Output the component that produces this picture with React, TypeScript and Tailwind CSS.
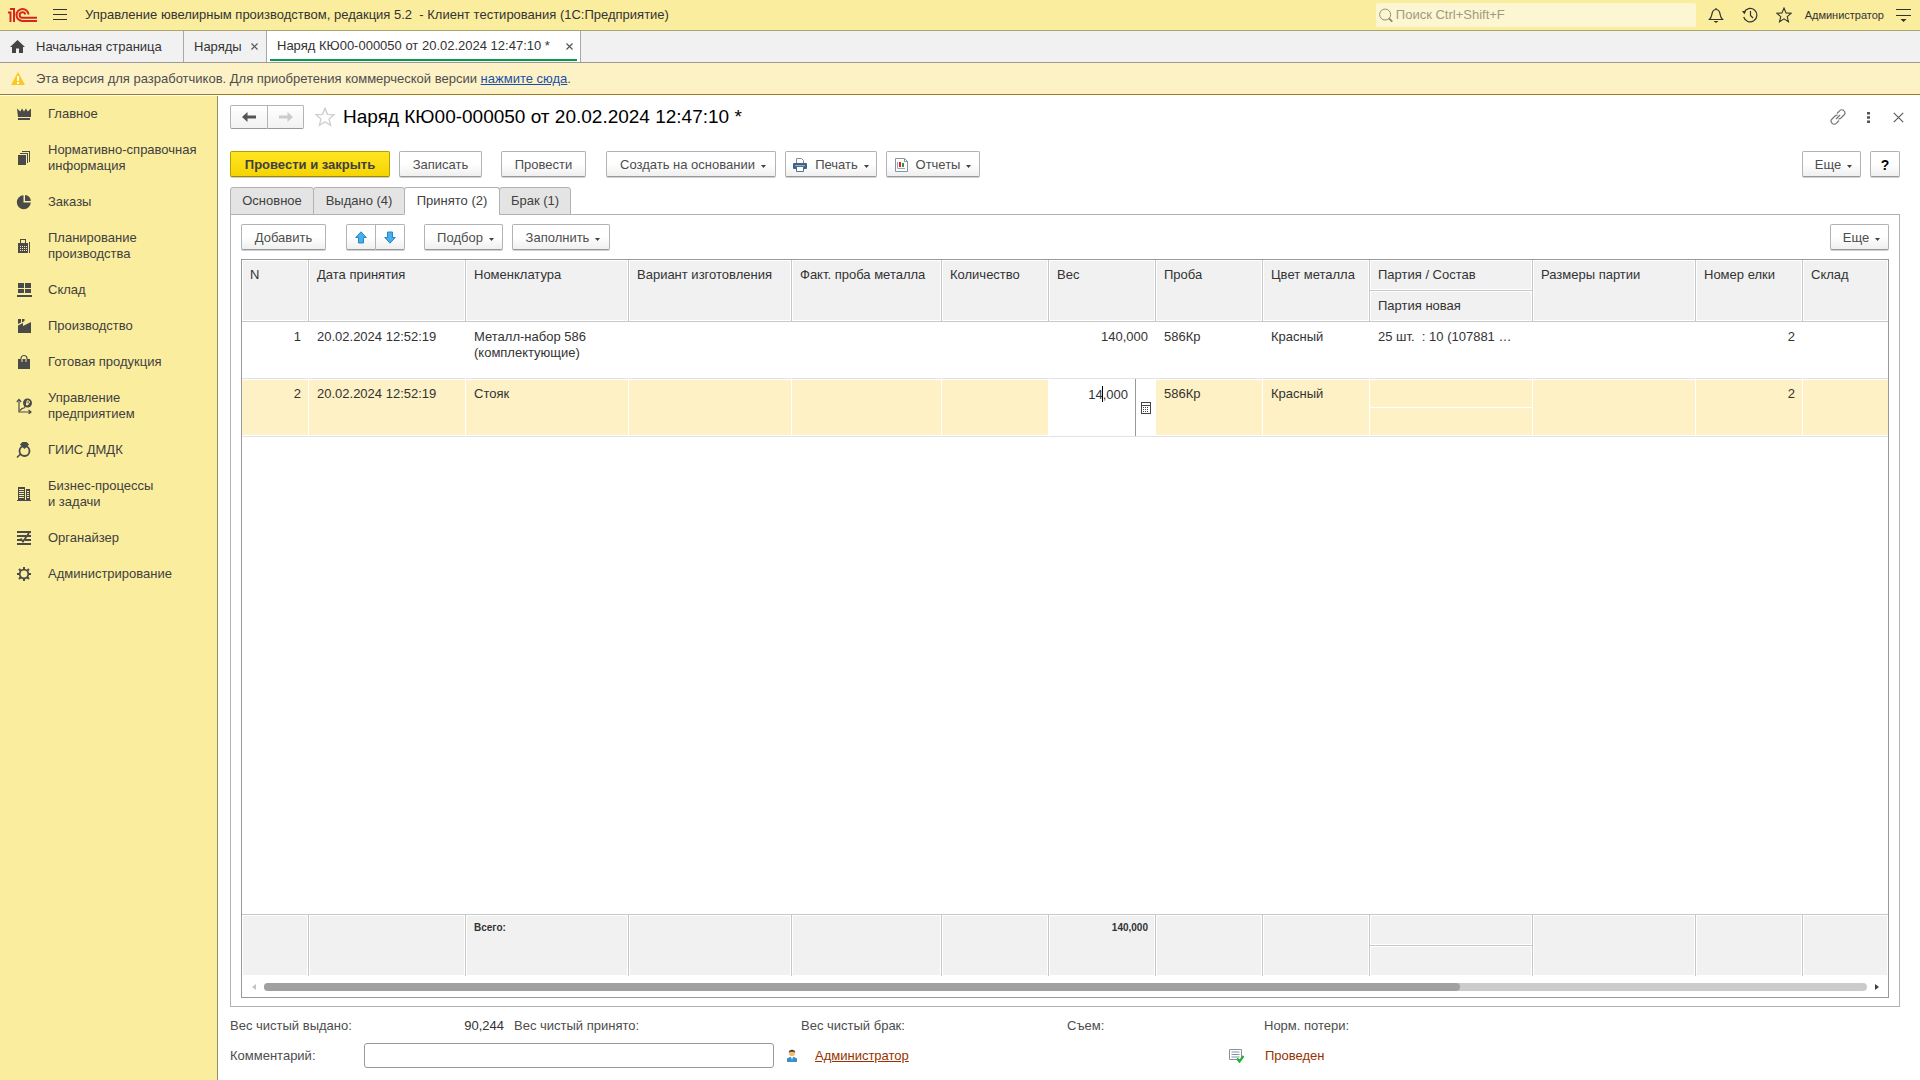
import { useState } from "react";
import type { ReactNode } from "react";

const NBSP = "\u00a0";

/* ---------- icons ---------- */

function Logo() {
  return (
    <svg width="30" height="16" viewBox="0 0 30 16" fill="none" stroke="#d9261c" strokeWidth="2" aria-label="1С">
      <path d="M0 5.5h2.5v9.5M2 2h4v13" />
      <path d="M20.5 7.5a6 6 0 1 0-6 6.5H29" />
      <path d="M17.2 7.5a2.8 2.8 0 1 0-2.7 3.3H29" />
    </svg>
  );
}

function Burger() {
  return (
    <svg width="14" height="12" viewBox="0 0 14 12" fill="#333" shapeRendering="crispEdges">
      <path d="M0 0h14v1H0zM0 5h14v1H0zM0 10h14v1H0z" />
    </svg>
  );
}

function Caret() {
  return (
    <svg width="5" height="3" viewBox="0 0 5 3" fill="#404040" className="mt-[3px] shrink-0">
      <path d="M0 0h5L2.5 3z" />
    </svg>
  );
}

function CloseIcon({ size = 7 }: { size?: number }) {
  return (
    <svg width={size} height={size} viewBox="0 0 7 7" stroke="#555" strokeWidth={size > 7 ? 0.7 : 1.2}>
      <path d="M.5.5l6 6M6.5.5l-6 6" />
    </svg>
  );
}

function StarIcon({ size, color }: { size: number; color: string }) {
  return (
    <svg width={size} height={size} viewBox="0 0 16 16" fill="none" stroke={color} strokeWidth="1.1">
      <path d="M8 1l2 4.9 5.2.3-4 3.4 1.3 5.1L8 11.9l-4.5 2.8 1.3-5.1-4-3.4 5.2-.3z" />
    </svg>
  );
}

function Small({ children }: { children: ReactNode }) {
  return (
    <svg width="16" height="16" viewBox="0 0 16 16" fill="#4a4a4a" className="shrink-0">
      {children}
    </svg>
  );
}

const icons = {
  crown: (
    <Small>
      <path d="M1 2.500l3.300 3L6 2.500 8 5.500l2-3 1.700 3L15 2.500V11H2zM2 12h12v2H2z" />
    </Small>
  ),
  books: (
    <Small>
      <path d="M2 5h8v10H2zM4 3h8v10h-1V4H4zM6 1h8v11h-1V2H6z" />
    </Small>
  ),
  pie: (
    <Small>
      <path d="M7.500 1.200v7.300h7.300A7 7 0 1 1 7.500 1.200z" />
      <path d="M9 1a6 6 0 0 1 5.800 6H9z" />
    </Small>
  ),
  register: (
    <Small>
      <path d="M3 5h1V1h6v4h2v10H2V5zM5 2v3h4V2zM13 4h1v11h-1z" fillRule="evenodd" />
      <path d="M4 8h1v1H4zM6 8h1v1H6zM8 8h1v1H8zM4 10h1v1H4zM6 10h1v1H6zM8 10h1v1H8zM4 12h1v1H4zM6 12h1v1H6zM8 12h1v1H8zM10 8h1v1h-1zM10 10h1v1h-1zM10 12h1v1h-1z" fill="#fbed9e" />
    </Small>
  ),
  stock: (
    <Small>
      <path d="M2 1h6v5H2zM9 1h6v5H9zM2 7h6v4H2zM9 7h6v4H9zM1 13h15v2H1z" />
    </Small>
  ),
  factory: (
    <Small>
      <path d="M2 1h3v3.500L2 6zM6 1h2.500v2L6 4.500zM2 7.500L7 5v3l8-4v11H2z" />
    </Small>
  ),
  bag: (
    <Small>
      <path d="M2 5h12v10H2z" />
      <path d="M5 8V4.500a3 3 0 0 1 6 0V8" fill="none" stroke="#4a4a4a" strokeWidth="1.200" />
      <path d="M5.500 8V5h1v3zM9.500 8V5h1v3z" fill="#fbed9e" />
    </Small>
  ),
  finance: (
    <Small>
      <path d="M3 3.500V14H15M.800 4L3 1.500 5.200 4M12.500 12l2.500 2-2.500 2M4 12.500l2-2 2-.500 1-1.500" fill="none" stroke="#4a4a4a" strokeWidth="1.200" />
      <circle cx="11.500" cy="5" r="4.500" />
      <path d="M11 7.500V2.800h1.200a1.300 1.300 0 0 1 0 2.600H10M10 6.500h2.500" fill="none" stroke="#fbed9e" />
    </Small>
  ),
  ring: (
    <Small>
      <circle cx="8.500" cy="9" r="5" fill="none" stroke="#4a4a4a" strokeWidth="1.800" />
      <path d="M5 2.500L7 .500h3l2 2L8.500 6zM5 11.500L1 15.500" stroke="#4a4a4a" strokeWidth="1.500" />
    </Small>
  ),
  building: (
    <Small>
      <path d="M2 1h7v13H2zM10 3h4v11h-4zM1 14h14v1H1z" />
      <path d="M3 3h5v1H3zM3 5h5v1H3zM3 7h5v1H3zM3 9h5v1H3zM3 11h5v1H3zM11 5h2v1h-2zM11 7h2v1h-2zM11 9h2v1h-2zM11 11h2v1h-2z" fill="#fbed9e" />
    </Small>
  ),
  planner: (
    <Small>
      <path d="M1 1h14v2H1zM1 5h9v2H1zM11 5h4v2h-4zM1 9h5v2H1zM9 9h6v2H9zM1 13h14v2H1z" />
      <path d="M4.500 8.500L7 11.500 13 3" fill="none" stroke="#4a4a4a" strokeWidth="1.800" />
    </Small>
  ),
  gear: (
    <Small>
      <circle cx="8" cy="8" r="4.300" fill="none" stroke="#4a4a4a" strokeWidth="1.800" />
      <path d="M8 1v3M8 12v3M1 8h3M12 8h3M3 3l2 2M11 11l2 2M13 3l-2 2M5 11l-2 2" stroke="#4a4a4a" strokeWidth="2" />
    </Small>
  ),
};

/* ---------- data ---------- */

const sections: { icon: keyof typeof icons; lines: string[] }[] = [
  { icon: "crown", lines: ["Главное"] },
  { icon: "books", lines: ["Нормативно-справочная", "информация"] },
  { icon: "pie", lines: ["Заказы"] },
  { icon: "register", lines: ["Планирование", "производства"] },
  { icon: "stock", lines: ["Склад"] },
  { icon: "factory", lines: ["Производство"] },
  { icon: "bag", lines: ["Готовая продукция"] },
  { icon: "finance", lines: ["Управление", "предприятием"] },
  { icon: "ring", lines: ["ГИИС ДМДК"] },
  { icon: "building", lines: ["Бизнес-процессы", "и задачи"] },
  { icon: "planner", lines: ["Органайзер"] },
  { icon: "gear", lines: ["Администрирование"] },
];

const formTabs = [
  { title: "Основное", width: "w-[84px]" },
  { title: "Выдано (4)", width: "w-[92px]" },
  { title: "Принято (2)", width: "w-[96px]" },
  { title: "Брак (1)", width: "w-[72px]" },
];

/* ---------- controls ---------- */

const buttonBase =
  "flex h-[26px] items-center justify-center rounded-[2px] border border-[#b3b3b3] border-b-[#999] bg-linear-to-b from-white from-50% to-[#efefef] text-[#4d4d4d] shadow-[0_1px_0_#d0d0d0]";

function Button({ className, menu, icon, children }: { className: string; menu?: boolean; icon?: ReactNode; children: ReactNode }) {
  return (
    <button type="button" className={`${buttonBase} pt-[2px] ${className}`}>
      {icon && <span className="mr-2">{icon}</span>}
      {children}
      {menu && (
        <span className="ml-[6px]">
          <Caret />
        </span>
      )}
    </button>
  );
}

function PrinterIcon() {
  return (
    <svg width="14" height="14" viewBox="0 0 14 14">
      <path d="M3.500 5V.500h5L10.500 2.500V5" fill="#fff" stroke="#7d8b99" />
      <rect x="0" y="5" width="14" height="6" rx="1" fill="#3d6285" />
      <path d="M2 7h10v1H2z" fill="#8fb0cc" />
      <path d="M3.500 8.500h7v5h-7z" fill="#fff" stroke="#54728f" />
    </svg>
  );
}

function ReportIcon() {
  return (
    <svg width="13" height="14" viewBox="0 0 13 14">
      <path d="M.500.500h9l3 3v10H.500z" fill="#fff" stroke="#8594a3" />
      <path d="M9.500.500v3h3" fill="none" stroke="#8594a3" />
      <path d="M2.500 4v6.500H10" fill="none" stroke="#9aa6b2" />
      <path d="M4 4h2v5H4z" fill="#e02020" />
      <path d="M7 5h2v4H7z" fill="#2f9a3a" />
    </svg>
  );
}

function TopBar() {
  return (
    <header className="flex h-[31px] shrink-0 items-center border-b border-[#a9a56e] bg-[#fbed9e] pr-[9px] pl-2">
      <Logo />
      <button type="button" aria-label="Меню" className="ml-[15px]">
        <Burger />
      </button>
      <h1 className="ml-[18px] whitespace-pre text-[#333]">
        {"Управление ювелирным производством, редакция 5.2  - Клиент тестирования (1С:Предприятие)"}
      </h1>
      <div className="ml-auto flex h-6 w-[320px] items-center rounded-[2px] bg-[#fdf6d3] pl-[3px]">
        <svg width="15" height="15" viewBox="0 0 15 15" fill="none" stroke="#8f8a6c">
          <circle cx="6.500" cy="6.500" r="5.800" />
          <path d="M10.500 10.500l3.500 3.500" strokeWidth="2" />
        </svg>
        <input
          type="search"
          aria-label="Поиск"
          placeholder="Поиск Ctrl+Shift+F"
          className="ml-[3px] w-full bg-transparent pb-px outline-none placeholder:text-[#a19b7c]"
        />
      </div>
      <div className="ml-[12px] flex items-center gap-[18px]">
        <button type="button" aria-label="Оповещения">
          <svg width="16" height="16" viewBox="0 0 16 16" fill="none" stroke="#333" strokeWidth="1.200">
            <path d="M1.500 12.500h13C12.500 10.500 12.500 9 11.800 6 11.200 3.500 10 2.500 8 2.500S4.800 3.500 4.200 6c-.700 3-.700 4.500-2.700 6.500zM8 2.500V1" />
            <path d="M5.500 14h5L8 16z" fill="#333" stroke="none" />
          </svg>
        </button>
        <button type="button" aria-label="История">
          <svg width="16" height="16" viewBox="0 0 16 16" fill="none" stroke="#333" strokeWidth="1.200">
            <path d="M2 5.500a6.700 6.700 0 1 1-.300 4.500M8.500 4v4.500l2.500 2.500" />
            <path d="M0 4l4 0-1.500 3.500z" fill="#333" stroke="none" />
          </svg>
        </button>
        <button type="button" aria-label="Избранное">
          <StarIcon size={16} color="#333" />
        </button>
      </div>
      <a href="#user" className="ml-[13px] text-[11px] text-[#333]">
        Администратор
      </a>
      <button type="button" aria-label="Сервис" className="ml-[12px]">
        <svg width="15" height="13" viewBox="0 0 15 13" fill="#333">
          <path d="M0 0h15v1H0zM0 6h15v1H0zM4.500 10h6l-3 3z" />
        </svg>
      </button>
    </header>
  );
}

function WindowTabs() {
  return (
    <nav className="flex h-8 shrink-0 border-b border-[#9a9a9a] bg-[#f1f1f1] text-[#333]">
      <a href="#home" className="flex w-[184px] items-center border-r border-[#a8a8a8] pl-[10px]">
        <svg width="15" height="13" viewBox="0 0 15 13" fill="#444">
          <path d="M7.500 0L15 7h-2v6H9V8.500H6V13H2V7H0z" />
        </svg>
        <span className="ml-[11px]">Начальная страница</span>
      </a>
      <div className="flex w-[83px] items-center justify-between border-r border-[#a8a8a8] pr-2 pl-[10px]">
        <a href="#orders">Наряды</a>
        <button type="button" aria-label="Закрыть вкладку">
          <CloseIcon />
        </button>
      </div>
      <div className="flex w-[314px] flex-col border-r border-[#a8a8a8] bg-white px-[3px] pb-px">
        <div className="flex flex-1 items-center justify-between border-b-2 border-[#079a4c] pt-[2px] pr-1 pl-[7px]">
          <a href="#order">Наряд КЮ00-000050 от 20.02.2024 12:47:10 *</a>
          <button type="button" aria-label="Закрыть вкладку">
            <CloseIcon />
          </button>
        </div>
      </div>
    </nav>
  );
}

function Banner() {
  return (
    <div className="flex h-8 shrink-0 items-center border-b border-[#9c7c1c] bg-[#fdf2c6] pl-[11px] text-[#4d4d4d]">
      <svg width="14" height="13" viewBox="0 0 14 13">
        <path d="M7 0l7 13H0z" fill="#fbc91b" />
        <path d="M6 4h2v5H6zM6 10h2v2H6z" fill="#fff" />
      </svg>
      <p className="ml-[11px]">
        Эта версия для разработчиков. Для приобретения коммерческой версии{" "}
        <a href="#buy" className="text-[#1a4fa8] underline">
          нажмите сюда
        </a>
        .
      </p>
    </div>
  );
}

function Sidebar() {
  return (
    <aside className="mt-px w-[218px] shrink-0 border-r border-[#968d5e] bg-[#fbed9e] text-[#404040]">
      {sections.map((s) => (
        <a key={s.icon} href={`#${s.icon}`} className="flex items-center py-[10px] pl-4">
          {icons[s.icon]}
          <span className="ml-4 leading-4">
            {s.lines.map((l) => (
              <span key={l} className="block whitespace-nowrap">
                {l}
              </span>
            ))}
          </span>
        </a>
      ))}
    </aside>
  );
}

/* ---------- table ---------- */

const headCell = "border-r border-b border-[#c8c8c8] bg-[#f1f1f1] px-2 pt-[7px] text-left align-top font-normal whitespace-nowrap shadow-[inset_0_0_0_1px_#fff] last:border-r-0";
const cell = "border-r border-b border-r-white border-b-[#e1e2e6] pt-[7px] pr-[7px] pl-2 align-top last:border-r-0";
const active = `${cell} bg-[#fdf1c5] shadow-[inset_0_1px_0_#fff,inset_0_-1px_0_#fff]`;
const footCell = "border-t border-r border-[#c8c8c8] bg-[#f1f1f1] pt-[5px] pr-[7px] pl-2 align-top text-[10px] font-bold shadow-[inset_0_0_0_1px_#fff] last:border-r-0";

function AcceptedTable() {
  const [weight, setWeight] = useState("14,000");

  return (
    <table className="h-full w-full table-fixed border-separate border-spacing-0 leading-4 text-[#333]">
      <colgroup>
        <col className="w-[67px]" />
        <col className="w-[157px]" />
        <col className="w-[163px]" />
        <col className="w-[163px]" />
        <col className="w-[150px]" />
        <col className="w-[107px]" />
        <col className="w-[107px]" />
        <col className="w-[107px]" />
        <col className="w-[107px]" />
        <col className="w-[163px]" />
        <col className="w-[163px]" />
        <col className="w-[107px]" />
        <col />
      </colgroup>
      <thead>
        <tr className="h-[31px]">
          <th rowSpan={2} className={headCell}>N</th>
          <th rowSpan={2} className={headCell}>Дата принятия</th>
          <th rowSpan={2} className={headCell}>Номенклатура</th>
          <th rowSpan={2} className={headCell}>Вариант изготовления</th>
          <th rowSpan={2} className={headCell}>Факт. проба металла</th>
          <th rowSpan={2} className={headCell}>Количество</th>
          <th rowSpan={2} className={headCell}>Вес</th>
          <th rowSpan={2} className={headCell}>Проба</th>
          <th rowSpan={2} className={headCell}>Цвет металла</th>
          <th className={headCell}>Партия / Состав</th>
          <th rowSpan={2} className={headCell}>Размеры партии</th>
          <th rowSpan={2} className={headCell}>Номер елки</th>
          <th rowSpan={2} className={headCell}>Склад</th>
        </tr>
        <tr className="h-[31px]">
          <th className="border-r border-b border-[#c8c8c8] bg-[#f1f1f1] px-2 pt-[7px] text-left align-top font-normal shadow-[inset_0_0_0_1px_#fff]">
            Партия новая
          </th>
        </tr>
      </thead>
      <tbody>
        <tr className="h-[57px]">
          <td className={`${cell} text-right`}>1</td>
          <td className={cell}>20.02.2024 12:52:19</td>
          <td className={cell}>Металл-набор 586 (комплектующие)</td>
          <td className={cell} />
          <td className={cell} />
          <td className={cell} />
          <td className={`${cell} text-right`}>140,000</td>
          <td className={cell}>586Кр</td>
          <td className={cell}>Красный</td>
          <td className={`${cell} whitespace-nowrap`}>{`25 шт.${NBSP} : 10 (107881 …`}</td>
          <td className={cell} />
          <td className={`${cell} text-right`}>2</td>
          <td className={cell} />
        </tr>
        <tr className="h-[29px]">
          <td rowSpan={2} className={`${active} text-right`}>2</td>
          <td rowSpan={2} className={active}>20.02.2024 12:52:19</td>
          <td rowSpan={2} className={active}>Стояк</td>
          <td rowSpan={2} className={active} />
          <td rowSpan={2} className={active} />
          <td rowSpan={2} className={active} />
          <td rowSpan={2} className="h-[58px] border-b border-[#e1e2e6] bg-white p-0">
            <div className="flex h-[57px]">
              <div className="relative flex-1 border-r border-[#999]">
                <input
                  aria-label="Вес"
                  value={weight}
                  onChange={(e) => setWeight(e.target.value)}
                  className="h-[30px] w-full bg-transparent pr-[7px] text-right leading-4 outline-none"
                />
                <span className="absolute top-[7px] right-[32px] h-4 w-px bg-black" />
              </div>
              <button type="button" aria-label="Калькулятор" className="flex w-5 items-center justify-center">
                <svg width="10" height="12" viewBox="0 0 10 12" shapeRendering="crispEdges">
                  <path d="M.500.500h9v11h-9z" fill="#fff" stroke="#444" />
                  <path d="M1 3h8v1H1zM2 5h1v1H2zM4 5h1v1H4zM6 5h1v1H6zM2 7h1v1H2zM4 7h1v1H4zM6 7h1v1H6zM2 9h1v1H2zM4 9h1v1H4zM6 9h1v1H6z" fill="#444" />
                </svg>
              </button>
            </div>
          </td>
          <td rowSpan={2} className={active}>586Кр</td>
          <td rowSpan={2} className={active}>Красный</td>
          <td className="border-r border-b border-white bg-[#fdf1c5] shadow-[inset_0_1px_0_#fff]" />
          <td rowSpan={2} className={active} />
          <td rowSpan={2} className={`${active} text-right`}>2</td>
          <td rowSpan={2} className={active} />
        </tr>
        <tr className="h-[29px]">
          <td className="border-r border-b border-r-white border-b-[#e1e2e6] bg-[#fdf1c5] shadow-[inset_0_-1px_0_#fff]" />
        </tr>
        <tr>
          <td colSpan={13} />
        </tr>
      </tbody>
      <tfoot>
        <tr className="h-[31px]">
          <td rowSpan={2} className={footCell} />
          <td rowSpan={2} className={footCell} />
          <td rowSpan={2} className={footCell}>Всего:</td>
          <td rowSpan={2} className={footCell} />
          <td rowSpan={2} className={footCell} />
          <td rowSpan={2} className={footCell} />
          <td rowSpan={2} className={`${footCell} text-right`}>140,000</td>
          <td rowSpan={2} className={footCell} />
          <td rowSpan={2} className={footCell} />
          <td className={footCell} />
          <td rowSpan={2} className={footCell} />
          <td rowSpan={2} className={footCell} />
          <td rowSpan={2} className={footCell} />
        </tr>
        <tr className="h-[31px]">
          <td className="border-t border-r border-[#c8c8c8] bg-[#f1f1f1] shadow-[inset_0_0_0_1px_#fff]" />
        </tr>
      </tfoot>
    </table>
  );
}

function ScrollBar() {
  return (
    <div className="flex h-[21px] shrink-0 items-center pr-[9px] pl-[10px]">
      <svg width="4" height="6" viewBox="0 0 4 6" fill="#c4c4c4">
        <path d="M4 0v6L0 3z" />
      </svg>
      <div className="mx-[8px] h-2 flex-1 rounded-full bg-[#cbcbcb]">
        <div className="h-2 w-[1196px] max-w-3/4 rounded-full bg-[#a0a0a0]" />
      </div>
      <svg width="4" height="6" viewBox="0 0 4 6" fill="#404040">
        <path d="M0 0v6l4-3z" />
      </svg>
    </div>
  );
}

function MoveArrow({ down }: { down?: boolean }) {
  return (
    <svg width="12" height="13" viewBox="0 0 12 13" fill="#45b0ee" stroke="#2b84bd" className={down ? "rotate-180" : ""}>
      <path d="M6 .800l5.300 5.700H8.500v5.500h-5V6.500H.700z" />
    </svg>
  );
}

function FormHeader() {
  return (
    <div className="flex h-6 items-center">
      <div className="flex">
        <button type="button" aria-label="Назад" className="flex h-6 w-[38px] items-center justify-center rounded-l-[2px] border border-[#b3b3b3] border-b-[#999] bg-linear-to-b from-white to-[#f2f2f2]">
          <svg width="14" height="10" viewBox="0 0 14 10" fill="#555">
            <path d="M5.500 0v3.500H14v3H5.500V10L0 5z" />
          </svg>
        </button>
        <button type="button" aria-label="Вперед" className="flex h-6 w-[36px] items-center justify-center rounded-r-[2px] border border-l-0 border-[#b3b3b3] border-b-[#999] bg-linear-to-b from-white to-[#f2f2f2]">
          <svg width="14" height="10" viewBox="0 0 14 10" fill="#ccc">
            <path d="M8.500 0v3.500H0v3h8.500V10L14 5z" />
          </svg>
        </button>
      </div>
      <button type="button" aria-label="В избранное" className="ml-[11px]">
        <StarIcon size={20} color="#d0d0d0" />
      </button>
      <h2 className="ml-2 text-[19px] leading-6 text-black">Наряд КЮ00-000050 от 20.02.2024 12:47:10 *</h2>
      <div className="-mr-1 ml-auto flex items-center">
        <button type="button" aria-label="Ссылка">
          <svg width="16" height="16" viewBox="0 0 16 16" fill="none" stroke="#777" strokeWidth="1.200">
            <path d="M7 4.500l2.500-2.700a2.900 2.900 0 0 1 4.500 0 3 3 0 0 1 0 4.200l-3 3a3 3 0 0 1-2.500.800M9 11.500l-2.500 2.700a2.900 2.900 0 0 1-4.500 0 3 3 0 0 1 0-4.200l3-3a3 3 0 0 1 2.500-.800M6 10l4-4" />
          </svg>
        </button>
        <button type="button" aria-label="Ещё действия" className="ml-[21px]">
          <svg width="3" height="11" viewBox="0 0 3 11" fill="#555">
            <path d="M0 0h3v2.500H0zM0 4.250h3v2.500H0zM0 8.500h3V11H0z" />
          </svg>
        </button>
        <button type="button" aria-label="Закрыть" className="ml-[23px]">
          <CloseIcon size={11} />
        </button>
      </div>
    </div>
  );
}

export default function App() {
  const [tab, setTab] = useState("Принято (2)");

  return (
    <div className="flex h-screen flex-col bg-white font-['Liberation_Sans',Arial,sans-serif] text-[13px] leading-4">
      <TopBar />
      <WindowTabs />
      <Banner />
      <div className="flex min-h-0 flex-1">
        <Sidebar />
        <main className="flex min-w-0 flex-1 flex-col pt-[10px] pr-5 pb-3 pl-3">
          <FormHeader />

          {/* Form commands */}
          <div className="mt-[22px] flex items-center">
            <button
              type="button"
              className="flex h-[26px] w-[160px] items-center justify-center rounded-[2px] border border-[#b59f00] border-b-[#9c8800] bg-linear-to-b from-[#ffe51f] to-[#f5d400] pt-[2px] font-bold text-[#404040] shadow-[0_1px_0_#d0d0d0]"
            >
              Провести и закрыть
            </button>
            <Button className="ml-[9px] w-[83px]">Записать</Button>
            <Button className="ml-[19px] w-[85px]">Провести</Button>
            <Button className="ml-5 w-[170px] pl-1" menu>Создать на основании</Button>
            <Button className="ml-[9px] w-[92px]" menu icon={<PrinterIcon />}>Печать</Button>
            <Button className="ml-[9px] w-[94px]" menu icon={<ReportIcon />}>Отчеты</Button>
            <Button className="ml-auto w-[59px] pl-1" menu>Еще</Button>
            <Button className="ml-[9px] w-[30px] text-sm font-bold text-black">?</Button>
          </div>

          {/* Pages of the document */}
          <div role="tablist" className="relative mt-[10px] -mb-px flex">
            {formTabs.map((t) => (
              <button
                key={t.title}
                type="button"
                role="tab"
                aria-selected={tab === t.title}
                onClick={() => setTab(t.title)}
                className={`${t.width} -mr-px h-7 rounded-t-[3px] border border-[#b3b3b3] text-[#404040] ${
                  tab === t.title ? "border-b-white bg-white" : "bg-[#e4e4e4]"
                }`}
              >
                {t.title}
              </button>
            ))}
          </div>

          <section className="flex min-h-0 flex-1 flex-col border border-[#b3b3b3] px-[10px] pt-[9px] pb-2">
            <div className="flex">
              <Button className="w-[85px]">Добавить</Button>
              <button type="button" aria-label="Переместить вверх" className={`${buttonBase} ml-5 w-[30px] rounded-r-none`}>
                <MoveArrow />
              </button>
              <button type="button" aria-label="Переместить вниз" className={`${buttonBase} w-[29px] rounded-l-none border-l-0`}>
                <MoveArrow down />
              </button>
              <Button className="ml-[19px] w-[79px] pl-1" menu>Подбор</Button>
              <Button className="ml-[9px] w-[98px] pl-1" menu>Заполнить</Button>
              <Button className="ml-auto w-[59px] pl-1" menu>Еще</Button>
            </div>
            <div className="mt-[9px] flex min-h-0 flex-1 flex-col border border-[#999]">
              <div className="min-h-0 flex-1">
                <AcceptedTable />
              </div>
              <ScrollBar />
            </div>
          </section>

          {/* Totals and comment */}
          <div className="mt-[11px] flex text-[#4d4d4d]">
            <span className="w-[134px]">Вес чистый выдано:</span>
            <span className="w-[140px] text-right text-[#333]">90,244</span>
            <span className="ml-[10px] w-[287px]">Вес чистый принято:</span>
            <span className="w-[266px]">Вес чистый брак:</span>
            <span className="w-[197px]">Съем:</span>
            <span>Норм. потери:</span>
          </div>
          <div className="mt-[9px] flex h-[25px] items-center text-[#4d4d4d]">
            <label htmlFor="comment" className="w-[134px]">
              Комментарий:
            </label>
            <input id="comment" className="h-[25px] w-[410px] rounded-[3px] border border-[#999] px-2 outline-none" />
            <svg width="10" height="13" viewBox="0 0 10 13" className="ml-[13px]">
              <path d="M0 13V9.500L3 8h4l3 1.500V13z" fill="#3b8fc7" />
              <path d="M4 8h2l-1 3z" fill="#fff" />
              <circle cx="5" cy="4.300" r="2.900" fill="#f0bd6c" />
              <path d="M1.800 4a3.200 3.200 0 0 1 6.400 0L7 2.800H3z" fill="#4a3b2a" />
            </svg>
            <a href="#author" className="ml-[18px] w-[414px] text-[#963200]">
              <span className="underline">Администратор</span>
            </a>
            <svg width="15" height="14" viewBox="0 0 15 14">
              <path d="M.500.500h12v10H.500z" fill="#fff" stroke="#8594a3" />
              <path d="M2.500 3h8M2.500 5.500h8M2.500 8h8" stroke="#8594a3" />
              <path d="M8 9.500l2.500 3L14.500 7" fill="none" stroke="#26b03a" strokeWidth="2.200" />
            </svg>
            <span className="ml-[21px] text-[#963200]">Проведен</span>
          </div>
        </main>
      </div>
    </div>
  );
}
